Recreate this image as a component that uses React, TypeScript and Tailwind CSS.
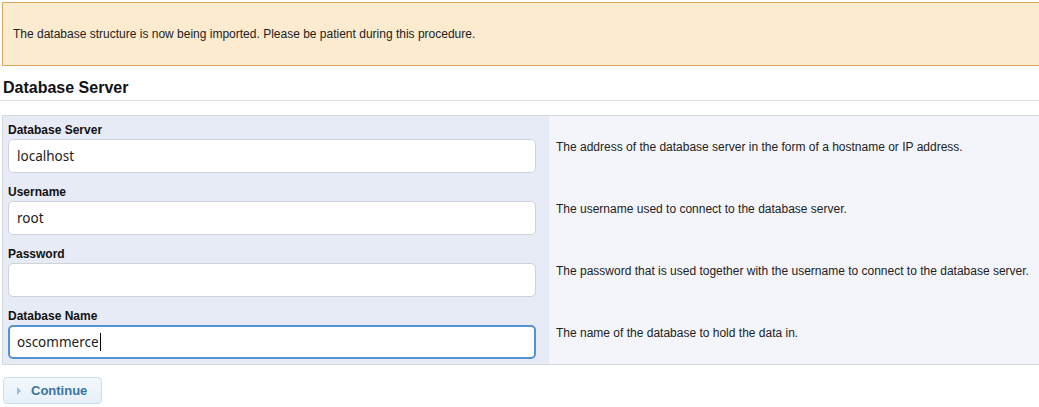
import React from "react";

const rows = [
  { label: "Database Server", value: "localhost", desc: "The address of the database server in the form of a hostname or IP address." },
  { label: "Username", value: "root", desc: "The username used to connect to the database server." },
  { label: "Password", value: "", desc: "The password that is used together with the username to connect to the database server." },
  { label: "Database Name", value: "oscommerce", desc: "The name of the database to hold the data in.", focus: true },
];

export default function App() {
  return (
    <div className="w-[1039px] h-[407px] overflow-hidden bg-white font-['Liberation_Sans',Arial,sans-serif] text-[12px] text-[#222]">
      <div className="ml-[2px] mt-[2px] h-[64px] bg-[#fdebcf] border border-r-0 border-[#dca664] flex items-center pl-[10px]">
        The database structure is now being imported. Please be patient during this procedure.
      </div>
      <h2 className="pt-[12px] pb-[3px] pl-[3px] text-[16px] leading-[19px] font-bold text-[#111] border-b border-[#dedede]">
        Database Server
      </h2>
      <div className="mt-[14px] ml-[2px] border-t border-b border-l border-[#d3d7e0]">
        {rows.map((r) => (
          <div key={r.label} className="flex h-[62px]">
            <div className="w-[546px] bg-[#e7ebf5] pl-[5px] pr-[13px] pt-[7px]">
              <div className="h-[14px] leading-[14px] font-bold text-[12px] text-[#111] mb-[2px]">{r.label}</div>
              {r.focus ? (
                <div className="h-[34px] rounded-[5px] border-2 border-[#5591d4] bg-white pl-[7px] flex items-center font-['Noto_Sans',sans-serif] text-[13.5px] text-[#222]">
                  <span>{r.value}</span>
                  <span className="inline-block w-[1px] h-[18px] bg-black ml-[1px]" />
                </div>
              ) : (
                <div className="h-[34px] rounded-[5px] border border-[#cfd2d6] bg-white pl-[8px] flex items-center font-['Noto_Sans',sans-serif] text-[13.5px] text-[#222]">
                  {r.value}
                </div>
              )}
            </div>
            <div className="flex-1 bg-[#f4f5fa] pl-[7px] flex items-center text-[#222]">{r.desc}</div>
          </div>
        ))}
      </div>
      <div className="mt-[12px] ml-[3px]">
        <button className="w-[99px] h-[27px] rounded-[4px] border border-[#c9def0] bg-gradient-to-b from-[#f3f8fc] to-[#e6f0f9] flex items-center pl-[13px] gap-[9px] text-[13px] font-bold text-[#3a74a6] font-['Liberation_Sans',Arial,sans-serif]">
          <svg width="5" height="8" viewBox="0 0 5 8"><path d="M0 0 L4 4 L0 8 Z" fill="#9db9d3" /></svg>
          Continue
        </button>
      </div>
    </div>
  );
}
